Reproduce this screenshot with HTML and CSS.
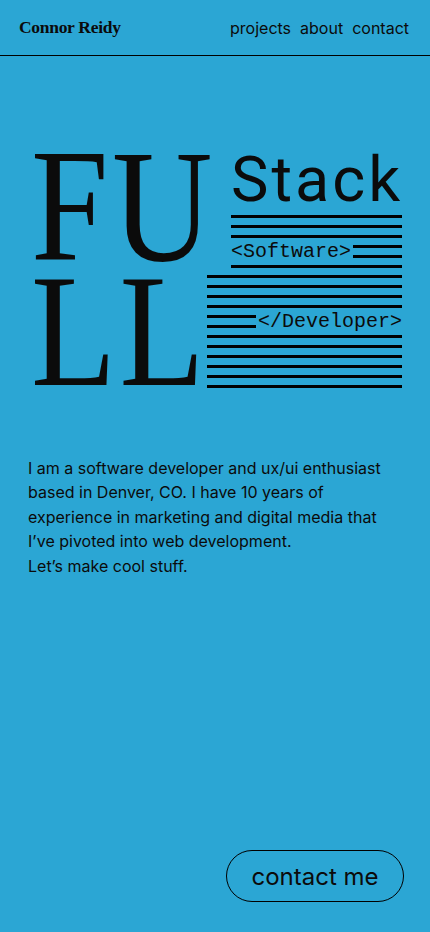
FILE: index.html
```html
<!DOCTYPE html>
<html lang="en">
<head>
  <meta charset="UTF-8" />
  <meta name="viewport" content="width=device-width, initial-scale=1.0"/>
  <title>Connor Reidy</title>
  <link rel="stylesheet" href="styles.css">
</head>
<body>
  <div class="page">
    <header class="top">
      <a class="logo" href="#">Connor Reidy</a>
      <nav class="nav">
        <a href="#projects">projects</a>
        <a href="#about">about</a>
        <a href="#contact">contact</a>
      </nav>
    </header>

    <section class="hero">
      <div class="hero-row first">
        <div class="big">FU</div>
        <div class="ruled narrow">
          <div class="stack">Stack</div>
          <div class="rule"></div>
          <div class="rule"></div>
          <div class="rule"></div>
          <div class="tag-row">
            <span class="tag">&lt;Software&gt;</span>
            <div class="fill"><div class="rule"></div><div class="rule"></div></div>
          </div>
          <div class="rule"></div>
        </div>
      </div>
      <div class="hero-row second">
        <div class="big">LL</div>
        <div class="ruled wide">
          <div class="rule"></div>
          <div class="rule"></div>
          <div class="rule"></div>
          <div class="rule"></div>
          <div class="tag-row">
            <div class="fill"><div class="rule"></div><div class="rule"></div></div>
            <span class="tag">&lt;/Developer&gt;</span>
          </div>
          <div class="rule"></div>
          <div class="rule"></div>
          <div class="rule"></div>
          <div class="rule"></div>
          <div class="rule"></div>
          <div class="rule"></div>
        </div>
      </div>
    </section>

    <p class="intro">
      I am a software developer and ux/ui enthusiast based in Denver, CO. I have 10 years of experience in marketing and digital media that I’ve pivoted into web development.<br>
      Let’s make cool stuff.
    </p>

    <div class="cta">
      <a class="btn" href="#contact">contact me</a>
    </div>
  </div>
</body>
</html>
```

FILE: styles.css
```css
body {
  margin: 0;
  background: #2ba6d4;
  color: #0b0b0b;
  font-family: Inter, "Noto Sans", sans-serif;
}
a {
  color: inherit;
  text-decoration: none;
}
.page {
  min-height: 932px;
  display: flex;
  flex-direction: column;
}
.top {
  height: 55px;
  border-bottom: 1px solid #000;
  display: flex;
  align-items: center;
  justify-content: space-between;
  padding: 0 21px 0 19px;
}
.logo {
  font-family: "Liberation Serif", serif;
  font-weight: bold;
  font-size: 17.5px;
  letter-spacing: -0.3px;
}
.nav {
  display: flex;
  gap: 9px;
  font-size: 16px;
}

/* hero */
.hero {
  padding: 92px 28px 0 31px;
}
.hero-row {
  display: flex;
  justify-content: space-between;
}
.big {
  font-family: "Liberation Serif", serif;
  font-size: 160px;
  letter-spacing: 4px;
  transform: scaleX(0.87);
  transform-origin: left top;
  white-space: nowrap;
  width: 170px;
}
.first .big {
  line-height: 117px;
}
.second .big {
  line-height: 120px;
  padding-top: 3px;
}
.ruled {
  display: flex;
  flex-direction: column;
  gap: 7px;
}
.narrow {
  width: 171px;
}
.wide {
  width: 195px;
  padding-top: 7px;
}
.rule {
  height: 3px;
  background: #000;
}
.stack {
  font-family: Roboto, sans-serif;
  font-size: 63px;
  line-height: 64px;
  letter-spacing: 3px;
  margin-bottom: -4px;
  white-space: nowrap;
}
.tag-row {
  display: flex;
  align-items: center;
  gap: 2px;
  height: 13px;
}
.tag {
  font-family: "Liberation Mono", monospace;
  font-size: 20px;
  line-height: 13px;
  white-space: nowrap;
}
.fill {
  flex: 1;
  height: 13px;
  display: flex;
  flex-direction: column;
  justify-content: space-between;
}

.intro {
  margin: 0;
  padding: 65px 28px 0 28px;
  font-size: 16px;
  line-height: 24.4px;
}
.cta {
  margin-top: auto;
  display: flex;
  justify-content: flex-end;
  padding: 0 26px 30px 0;
}
.btn {
  width: 178px;
  height: 52px;
  box-sizing: border-box;
  border: 1px solid #000;
  border-radius: 26px;
  display: flex;
  align-items: center;
  justify-content: center;
  font-size: 24px;
}
```
